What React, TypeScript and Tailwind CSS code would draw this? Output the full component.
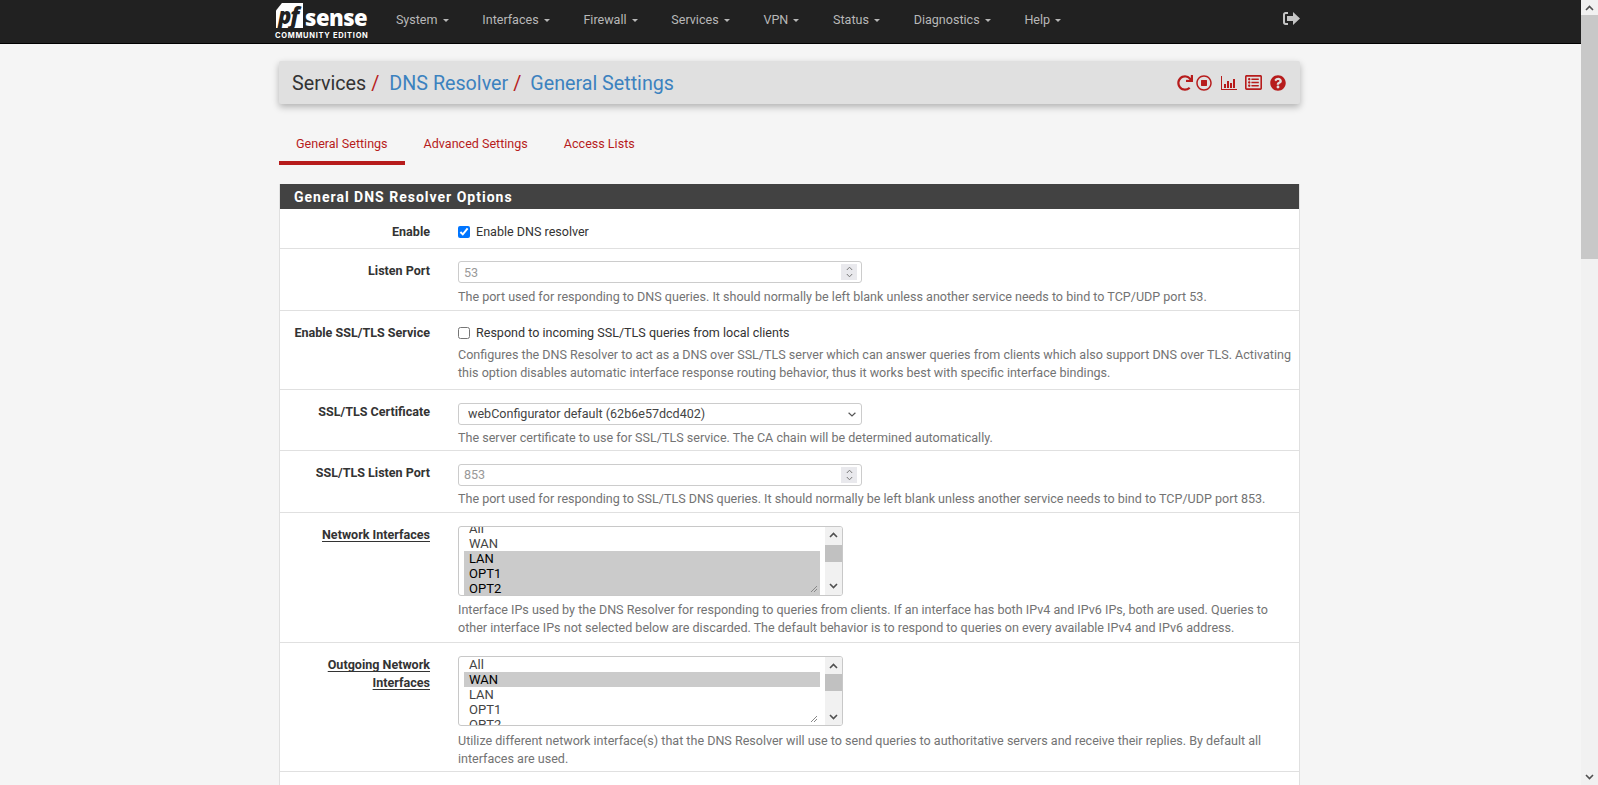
import React from 'react';
import { FaQuestionCircle, FaRedo, FaRegListAlt, FaRegStopCircle } from 'react-icons/fa';

const navItems = ['System', 'Interfaces', 'Firewall', 'Services', 'VPN', 'Status', 'Diagnostics', 'Help'];

const BarChart = () => (
  <svg width="16" height="14" viewBox="0 0 16 14" fill="currentColor">
    <path d="M0 0h1v13h15v1H0z" />
    <path d="M3 8h2v4H3zM6 5h2v7H6zM9 7h2v5H9zM12 3h2v9h-2z" />
  </svg>
);

const SignOut = () => (
  <svg width="17" height="13" viewBox="0 0 17 13" fill="currentColor">
    <path d="M5 0v2H3C2.4 2 2 2.4 2 3v7c0 .6.4 1 1 1h2v2H2.500C1.100 13 0 11.900 0 10.500v-8C0 1.100 1.100 0 2.500 0z" />
    <path d="M10 0l7 6.500L10 13V9H4V4h6z" />
  </svg>
);

const ChevronUp = () => (
  <svg width="9" height="6" viewBox="0 0 9 6" fill="none" stroke="#505050" strokeWidth="1.600"><path d="M1 5l3.500-3.500L8 5" /></svg>
);

const ChevronDown = () => (
  <svg width="9" height="6" viewBox="0 0 9 6" fill="none" stroke="#505050" strokeWidth="1.600"><path d="M1 1l3.500 3.500L8 1" /></svg>
);

// spinner arrows shown inside the number inputs
const Spinner = () => (
  <div className="absolute right-[5px] top-[3px] flex h-[16px] w-[16px] items-center justify-center bg-[#e9e9ed]">
    <svg width="7" height="12" viewBox="0 0 7 12" fill="none" stroke="#777" strokeWidth="1">
      <path d="M.8 4 3.500 1.200 6.200 4M.8 8l2.700 2.800L6.200 8" />
    </svg>
  </div>
);

const NumberInput = ({ value }: { value: string }) => (
  <div className="relative h-[22px] w-[404px]">
    <input
      readOnly
      placeholder={value}
      className="h-full w-full rounded-[3px] border border-[#cccccc] bg-white px-[5px] text-[12.550px] placeholder:text-[#999]"
    />
    <Spinner />
  </div>
);

const Help = ({ gap, children }: { gap: string; children: React.ReactNode }) => (
  <p className={`text-[#737373] ${gap}`}>{children}</p>
);

interface RowProps {
  label: React.ReactNode;
  pad: string;
  labelPad?: string;
  children: React.ReactNode;
}

const Row = ({ label, pad, labelPad = '', children }: RowProps) => (
  <div className={`flex border-b border-[#e0e0e0] ${pad}`}>
    <div className={`w-[150px] shrink-0 text-right font-bold text-[#333] ${labelPad}`}>{label}</div>
    <div className="ml-[28px] min-w-0 flex-1 pr-[8px]">{children}</div>
  </div>
);

const Check = ({ checked, text }: { checked?: boolean; text: string }) => (
  <label className="flex h-[18.300px] items-center text-[#333]">
    <input type="checkbox" defaultChecked={checked} className="m-0 h-[12px] w-[12px] accent-[#0075ff]" />
    <span className="ml-[6px]">{text}</span>
  </label>
);

interface ListBoxProps {
  items: string[];
  selected: string[];
  offset: string;
  thumb: string;
}

const ListBox = ({ items, selected, offset, thumb }: ListBoxProps) => (
  <div className="flex h-[70px] w-[385px] overflow-hidden rounded-[3px] border border-[#c8c8c8] bg-white">
    <div className="relative min-w-0 flex-1 overflow-hidden pl-[5px] pr-[5px]">
      <div className={offset}>
        {items.map((item) => (
          <div
            key={item}
            className={`h-[15px] px-[5px] text-[13px] leading-[15px] ${selected.includes(item) ? 'bg-[#cbcbcb] text-black' : 'text-[#444]'}`}
          >
            {item}
          </div>
        ))}
      </div>
      <svg className="absolute bottom-[3px] right-[8px]" width="6" height="6" viewBox="0 0 6 6" stroke="#888" strokeWidth="1">
        <path d="M0 6 6 0M3 6l3-3" />
      </svg>
    </div>
    <div className="flex w-[17px] shrink-0 flex-col bg-[#f1f1f1]">
      <div className="flex h-[17px] shrink-0 items-center justify-center">
        <ChevronUp />
      </div>
      <div className={`h-[17px] bg-[#c1c1c1] ${thumb}`} />
      <div className="flex-1" />
      <div className="flex h-[17px] shrink-0 items-center justify-center">
        <ChevronDown />
      </div>
    </div>
  </div>
);

const App = () => {
  return (
    <div className="flex h-screen overflow-hidden bg-[#f5f5f5] font-['Roboto',sans-serif] text-[12.550px] leading-[18.300px]">
      <div className="flex min-w-0 flex-1 flex-col overflow-hidden">
        <nav className="flex h-[44px] shrink-0 border-b border-black bg-[#212121] pl-[279px]">
          <div className="flex w-[1021px] items-stretch">
            <div className="relative ml-[-4px] h-full w-[104px] shrink-0">
              <div className="absolute left-[1px] top-[3px] flex h-[25px] w-[27px] items-center bg-white pl-[2px] [clip-path:polygon(22%_0,100%_0,100%_100%,0_100%,0_30%)]">
                <span className="font-['Open_Sans',sans-serif] text-[22px] font-extrabold italic leading-[25px] tracking-[-1px] text-[#212121]">pf</span>
              </div>
              <span className="absolute left-[30px] top-[3px] font-['Open_Sans',sans-serif] text-[22px] font-extrabold leading-[28px] tracking-[-0.500px] text-white">sense</span>
              <span className="absolute left-[0px] top-[31px] whitespace-nowrap font-['Inter',sans-serif] text-[7.500px] font-bold leading-[9px] tracking-[0.700px] text-white">COMMUNITY EDITION</span>
            </div>
            <ul className="flex items-center pb-[2px]">
              {navItems.map((item) => (
                <li key={item} className="flex items-center px-[16.900px] text-[#b8b8b8]">
                  {item}
                  <span className="ml-[5px] mt-[1px] h-0 w-0 border-x-[3px] border-t-[3px] border-x-transparent border-t-[#b8b8b8]" />
                </li>
              ))}
            </ul>
            <div className="ml-auto flex items-center pb-[6px] text-[#c4c4c4]">
              <SignOut />
            </div>
          </div>
        </nav>

        <main className="ml-[279px] w-[1021px] pt-[17px]">
          <div className="flex h-[43px] items-center justify-between rounded-[2px] bg-[#e0e0e0] pl-[13px] pr-[14px] shadow-[0_3px_7px_rgba(0,0,0,0.28)]">
            <div className="flex items-center pt-[4px] text-[19.700px]">
              <span className="text-[#333]">Services</span>
              <span className="ml-[5px] text-[#b71c1c]">/</span>
              <span className="ml-[10px] text-[#3c82bf]">DNS Resolver</span>
              <span className="ml-[5px] text-[#b71c1c]">/</span>
              <span className="ml-[9px] text-[#3c82bf]">General Settings</span>
            </div>
            <div className="flex items-center text-[#b71c1c]">
              <FaRedo size={16} />
              <FaRegStopCircle size={16} className="ml-[3px]" />
              <span className="ml-[9px]"><BarChart /></span>
              <FaRegListAlt size={17} className="ml-[8px]" />
              <FaQuestionCircle size={16} className="ml-[8px]" />
            </div>
          </div>

          <div className="mt-[21px] flex h-[40px] text-[#b71c1c]">
            <div className="border-b-[4px] border-[#b71c1c] px-[17px] pt-[10px]">General Settings</div>
            <div className="ml-[2px] px-[17px] pt-[10px]">Advanced Settings</div>
            <div className="ml-[2px] px-[17px] pt-[10px]">Access Lists</div>
          </div>

          <section className="mt-[19px] border-x border-[#e0e0e0] bg-white">
            <h2 className="flex h-[25px] items-center bg-[#424242] px-[14px] pt-[2px] text-[14px] font-bold tracking-[1px] text-white">
              General DNS Resolver Options
            </h2>

            <Row label="Enable" pad="pt-[14px] pb-[7px]">
              <Check checked text="Enable DNS resolver" />
            </Row>

            <Row label="Listen Port" pad="pt-[12px] pb-[3px]" labelPad="pt-[1px]">
              <NumberInput value="53" />
              <Help gap="mt-[5px]">The port used for responding to DNS queries. It should normally be left blank unless another service needs to bind to TCP/UDP port 53.</Help>
            </Row>

            <Row label="Enable SSL/TLS Service" pad="pt-[13px] pb-[6.500px]">
              <Check text="Respond to incoming SSL/TLS queries from local clients" />
              <Help gap="mt-[4px]">Configures the DNS Resolver to act as a DNS over SSL/TLS server which can answer queries from clients which also support DNS over TLS. Activating this option disables automatic interface response routing behavior, thus it works best with specific interface bindings.</Help>
            </Row>

            <Row label="SSL/TLS Certificate" pad="pt-[13px] pb-[2.500px]" labelPad="pt-[0.500px]">
              <div className="relative h-[22px] w-[404px]">
                <select className="h-full w-full appearance-none rounded-[3px] border border-[#cccccc] bg-white px-[9px] text-[12.550px] text-[#444]">
                  <option>webConfigurator default (62b6e57dcd402)</option>
                </select>
                <svg className="pointer-events-none absolute right-[6px] top-[9px]" width="8" height="5" viewBox="0 0 8 5" fill="none" stroke="#555" strokeWidth="1.200">
                  <path d="M.6.8 4 4 7.400.8" />
                </svg>
              </div>
              <Help gap="mt-[4px]">The server certificate to use for SSL/TLS service. The CA chain will be determined automatically.</Help>
            </Row>

            <Row label="SSL/TLS Listen Port" pad="pt-[13px] pb-[3.500px]">
              <NumberInput value="853" />
              <Help gap="mt-[4px]">The port used for responding to SSL/TLS DNS queries. It should normally be left blank unless another service needs to bind to TCP/UDP port 853.</Help>
            </Row>

            <Row label={<span className="underline underline-offset-2">Network Interfaces</span>} pad="pt-[13px] pb-[5px]">
              <ListBox items={['All', 'WAN', 'LAN', 'OPT1', 'OPT2']} selected={['LAN', 'OPT1', 'OPT2']} offset="mt-[-6px]" thumb="mt-[1px]" />
              <Help gap="mt-[5px]">Interface IPs used by the DNS Resolver for responding to queries from clients. If an interface has both IPv4 and IPv6 IPs, both are used. Queries to other interface IPs not selected below are discarded. The default behavior is to respond to queries on every available IPv4 and IPv6 address.</Help>
            </Row>

            <Row label={<span className="underline underline-offset-2">Outgoing Network Interfaces</span>} pad="pt-[13px] pb-[2px]">
              <ListBox items={['All', 'WAN', 'LAN', 'OPT1', 'OPT2']} selected={['WAN']} offset="" thumb="" />
              <Help gap="mt-[6px]">Utilize different network interface(s) that the DNS Resolver will use to send queries to authoritative servers and receive their replies. By default all interfaces are used.</Help>
            </Row>

            <div className="h-[40px]" />
          </section>
        </main>
      </div>

      <aside className="flex w-[17px] shrink-0 flex-col bg-[#f1f1f1]">
        <div className="flex h-[15px] shrink-0 items-center justify-center">
          <ChevronUp />
        </div>
        <div className="h-[244px] bg-[#c8c8c8]" />
        <div className="flex-1" />
        <div className="flex h-[17px] shrink-0 items-center justify-center">
          <ChevronDown />
        </div>
      </aside>
    </div>
  );
};

export default App;
